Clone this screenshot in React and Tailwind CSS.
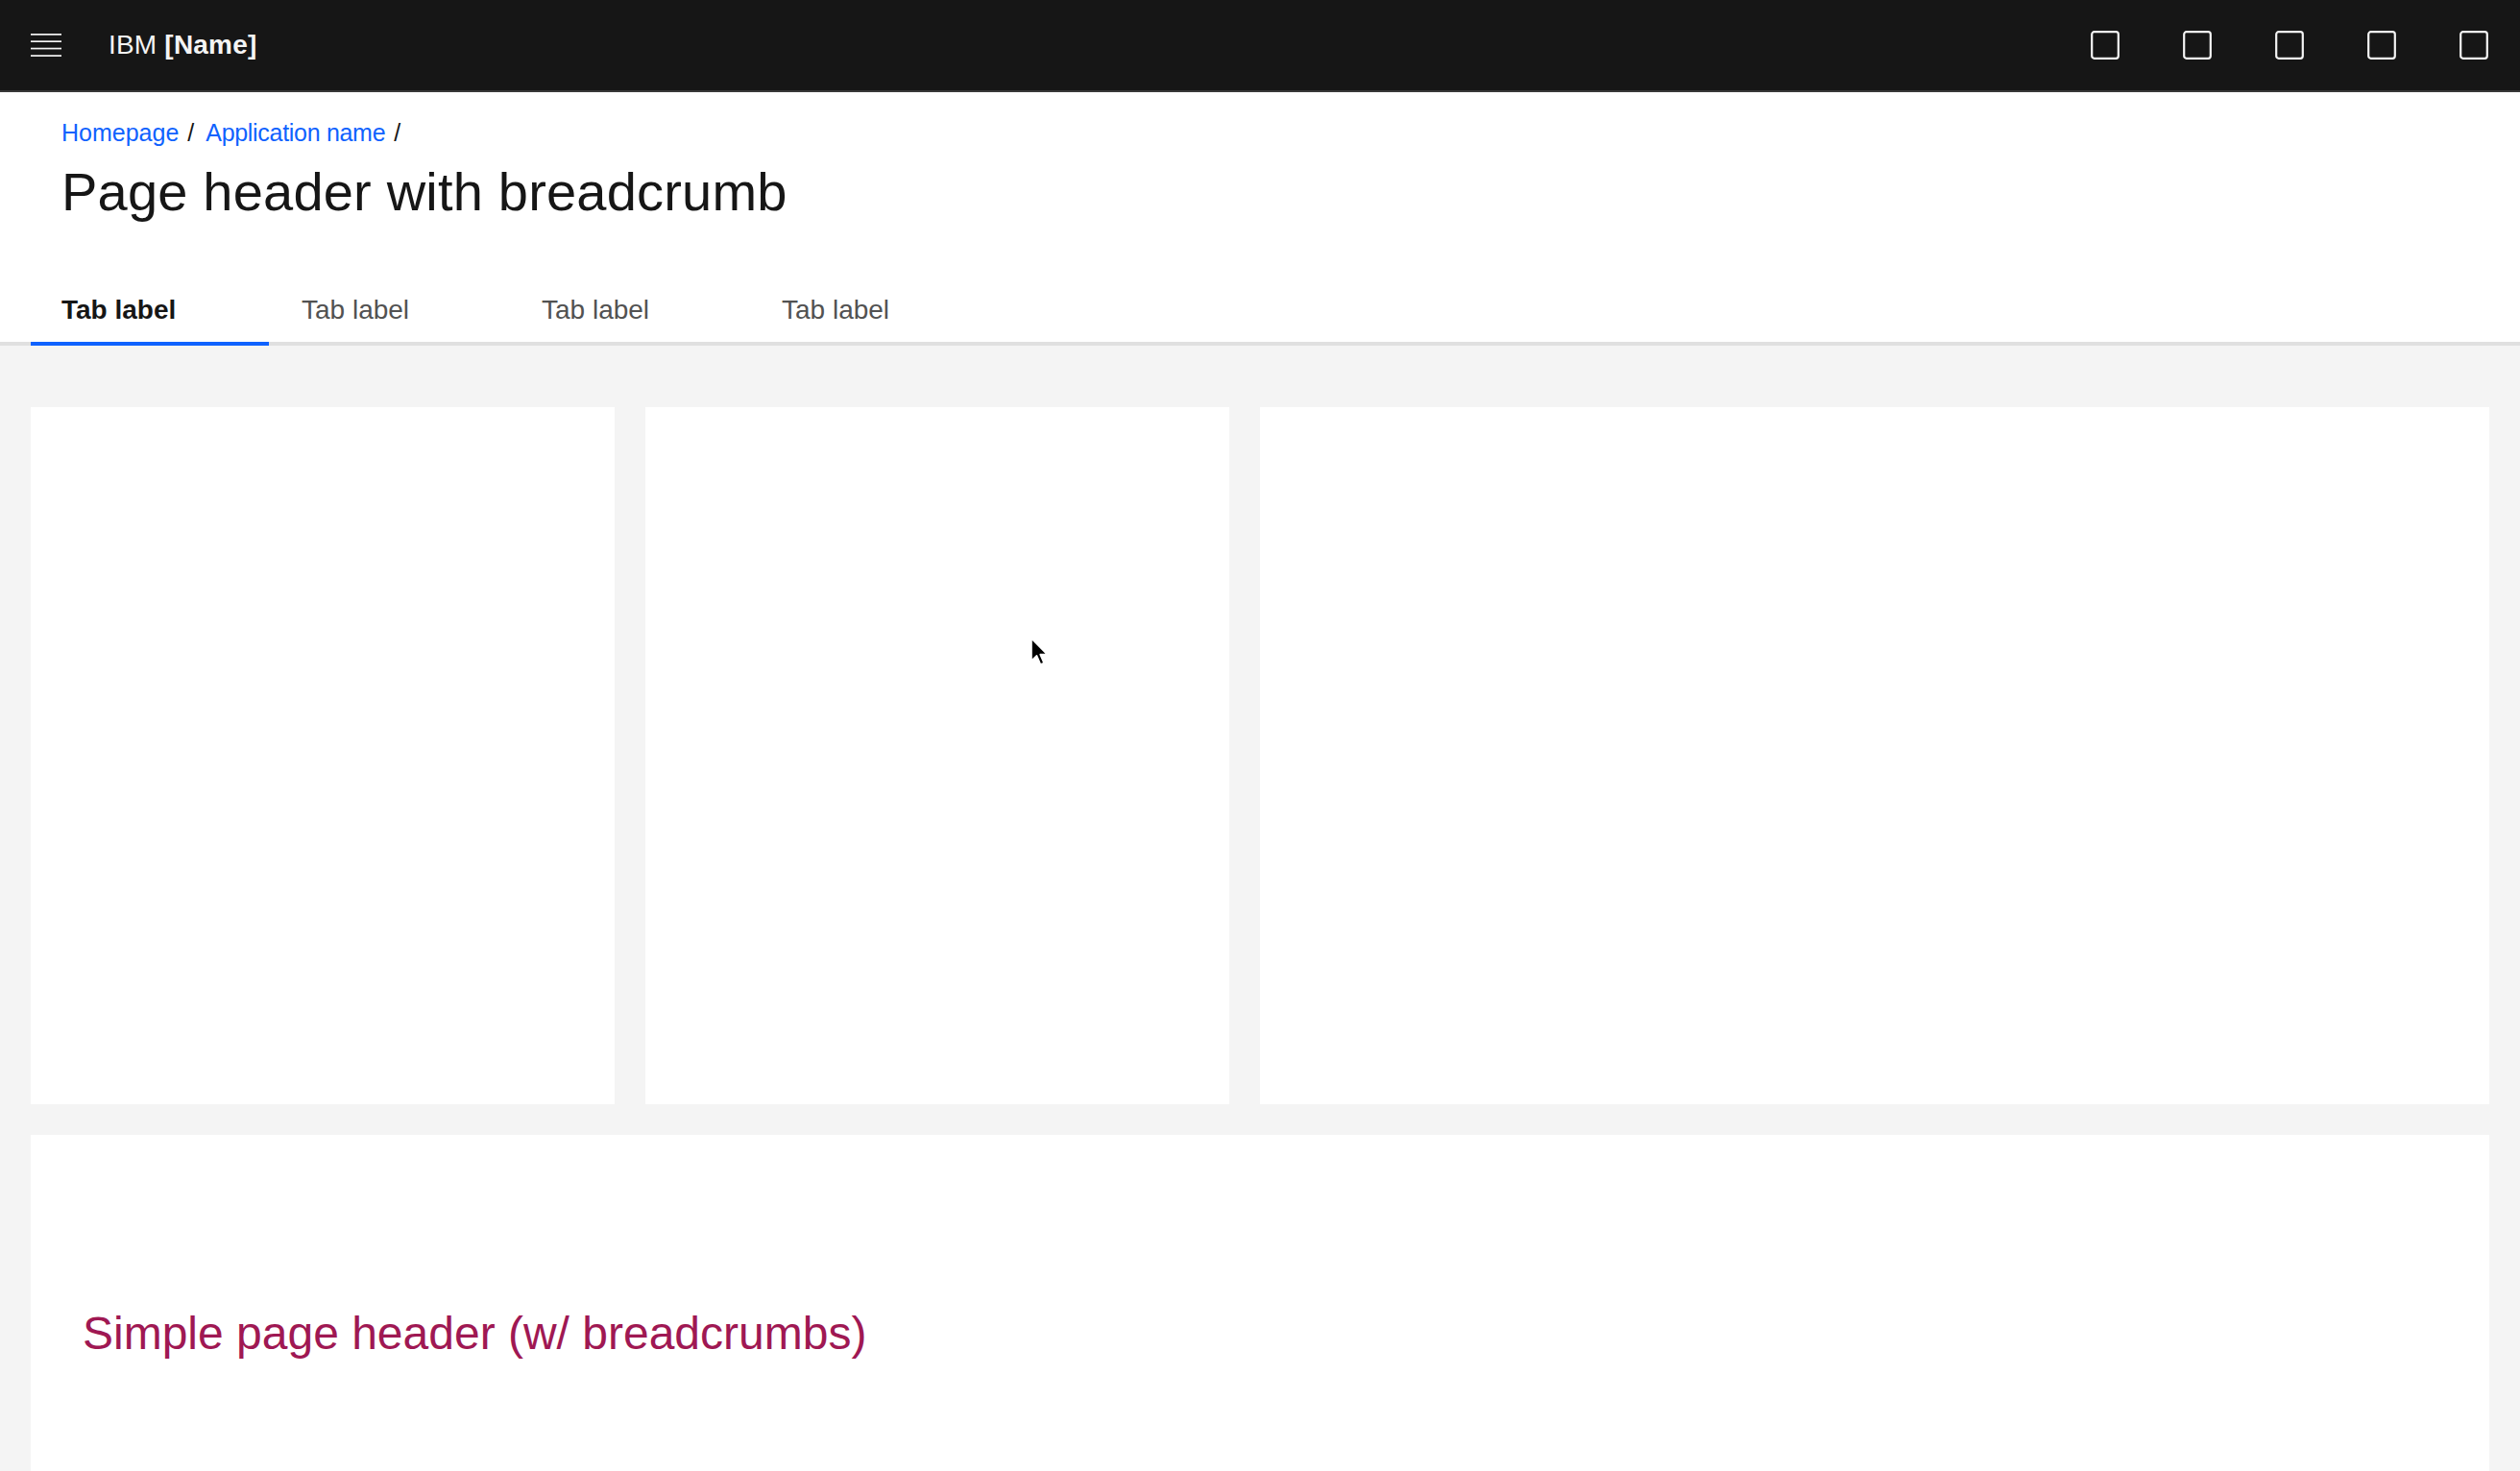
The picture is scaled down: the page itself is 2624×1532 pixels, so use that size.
const font = { fontFamily: '"Liberation Sans", Arial, sans-serif' };

function SquareIcon() {
    return (
        <svg width="32" height="32" viewBox="0 0 32 32" fill="none">
            <rect x="2.2" y="2.2" width="27.6" height="27.6" rx="2.5" stroke="#f4f4f4" strokeWidth="2.2" />
        </svg>
    );
}

function MenuIcon() {
    return (
        <svg width="32" height="32" viewBox="0 0 32 32" fill="#f4f4f4">
            <rect x="0" y="4" width="32" height="1.7" />
            <rect x="0" y="11.3" width="32" height="1.7" />
            <rect x="0" y="18.7" width="32" height="1.7" />
            <rect x="0" y="26.2" width="32" height="1.7" />
        </svg>
    );
}

function Tab({ label, selected }) {
    return (
        <div
            className={
                'w-[248px] pl-8 pt-4 pb-[15px] border-b-4 -mb-1 text-[28px] leading-[36px] ' +
                (selected
                    ? 'border-[#0f62fe] text-[#161616] font-semibold'
                    : 'border-[#e0e0e0] text-[#525252]')
            }
        >
            {label}
        </div>
    );
}

export default function App() {
    return (
        <div className="relative min-h-screen bg-[#f4f4f4]" style={font}>
            {/* top bar */}
            <header className="flex items-center h-[96px] bg-[#161616] border-b-2 border-[#393939]">
                <button className="w-[96px] h-[94px] flex items-center justify-center">
                    <MenuIcon />
                </button>
                <div className="ml-[17px] text-[28px] text-[#f4f4f4] tracking-[0.2px]">
                    IBM <span className="font-semibold">[Name]</span>
                </div>
                <div className="ml-auto flex">
                    {[0, 1, 2, 3, 4].map((i) => (
                        <button key={i} className="w-[96px] h-[94px] flex items-center justify-center">
                            <SquareIcon />
                        </button>
                    ))}
                </div>
            </header>

            {/* page header */}
            <div className="bg-white pt-[26px] border-b-4 border-[#e0e0e0]">
                <nav className="pl-16 flex items-center text-[25px] leading-[32px]">
                    <a className="text-[#0f62fe]">Homepage</a>
                    <span className="text-[#161616] ml-[9px] mr-[12px]">/</span>
                    <a className="text-[#0f62fe] tracking-[-0.3px]">Application name</a>
                    <span className="text-[#161616] ml-[9px]">/</span>
                </nav>
                <h1 className="pl-16 mt-[14px] text-[56px] leading-[64px] tracking-[0.2px] text-[#161616]">
                    Page header with breadcrumb
                </h1>
                <div className="mt-[57px] pl-8 flex gap-[2px]">
                    <Tab label="Tab label" selected />
                    <Tab label="Tab label" />
                    <Tab label="Tab label" />
                    <Tab label="Tab label" />
                </div>
            </div>

            {/* content */}
            <main className="px-8 pt-16 pb-8 flex flex-col gap-8">
                <div className="grid grid-cols-[608px_608px_1fr] gap-8">
                    <div className="h-[726px] bg-white" />
                    <div className="h-[726px] bg-white" />
                    <div className="h-[726px] bg-white" />
                </div>
                <div className="bg-white h-[420px] pt-[179px] pl-[54px]">
                    <h2 className="text-[48px] leading-[56px] font-light text-[#9f1853]">
                        Simple page header (w/ breadcrumbs)
                    </h2>
                </div>
            </main>

            {/* mouse pointer */}
            <svg className="absolute left-[1072px] top-[663px]" width="24" height="34" viewBox="0 0 24 34">
                <path
                    d="M2 2 L2 25 L7.5 19.8 L11.5 29 L15 27.5 L11.2 18.6 L18.5 18.6 Z"
                    fill="#000"
                    stroke="#fff"
                    strokeWidth="1.6"
                    strokeLinejoin="round"
                />
            </svg>
        </div>
    );
}
